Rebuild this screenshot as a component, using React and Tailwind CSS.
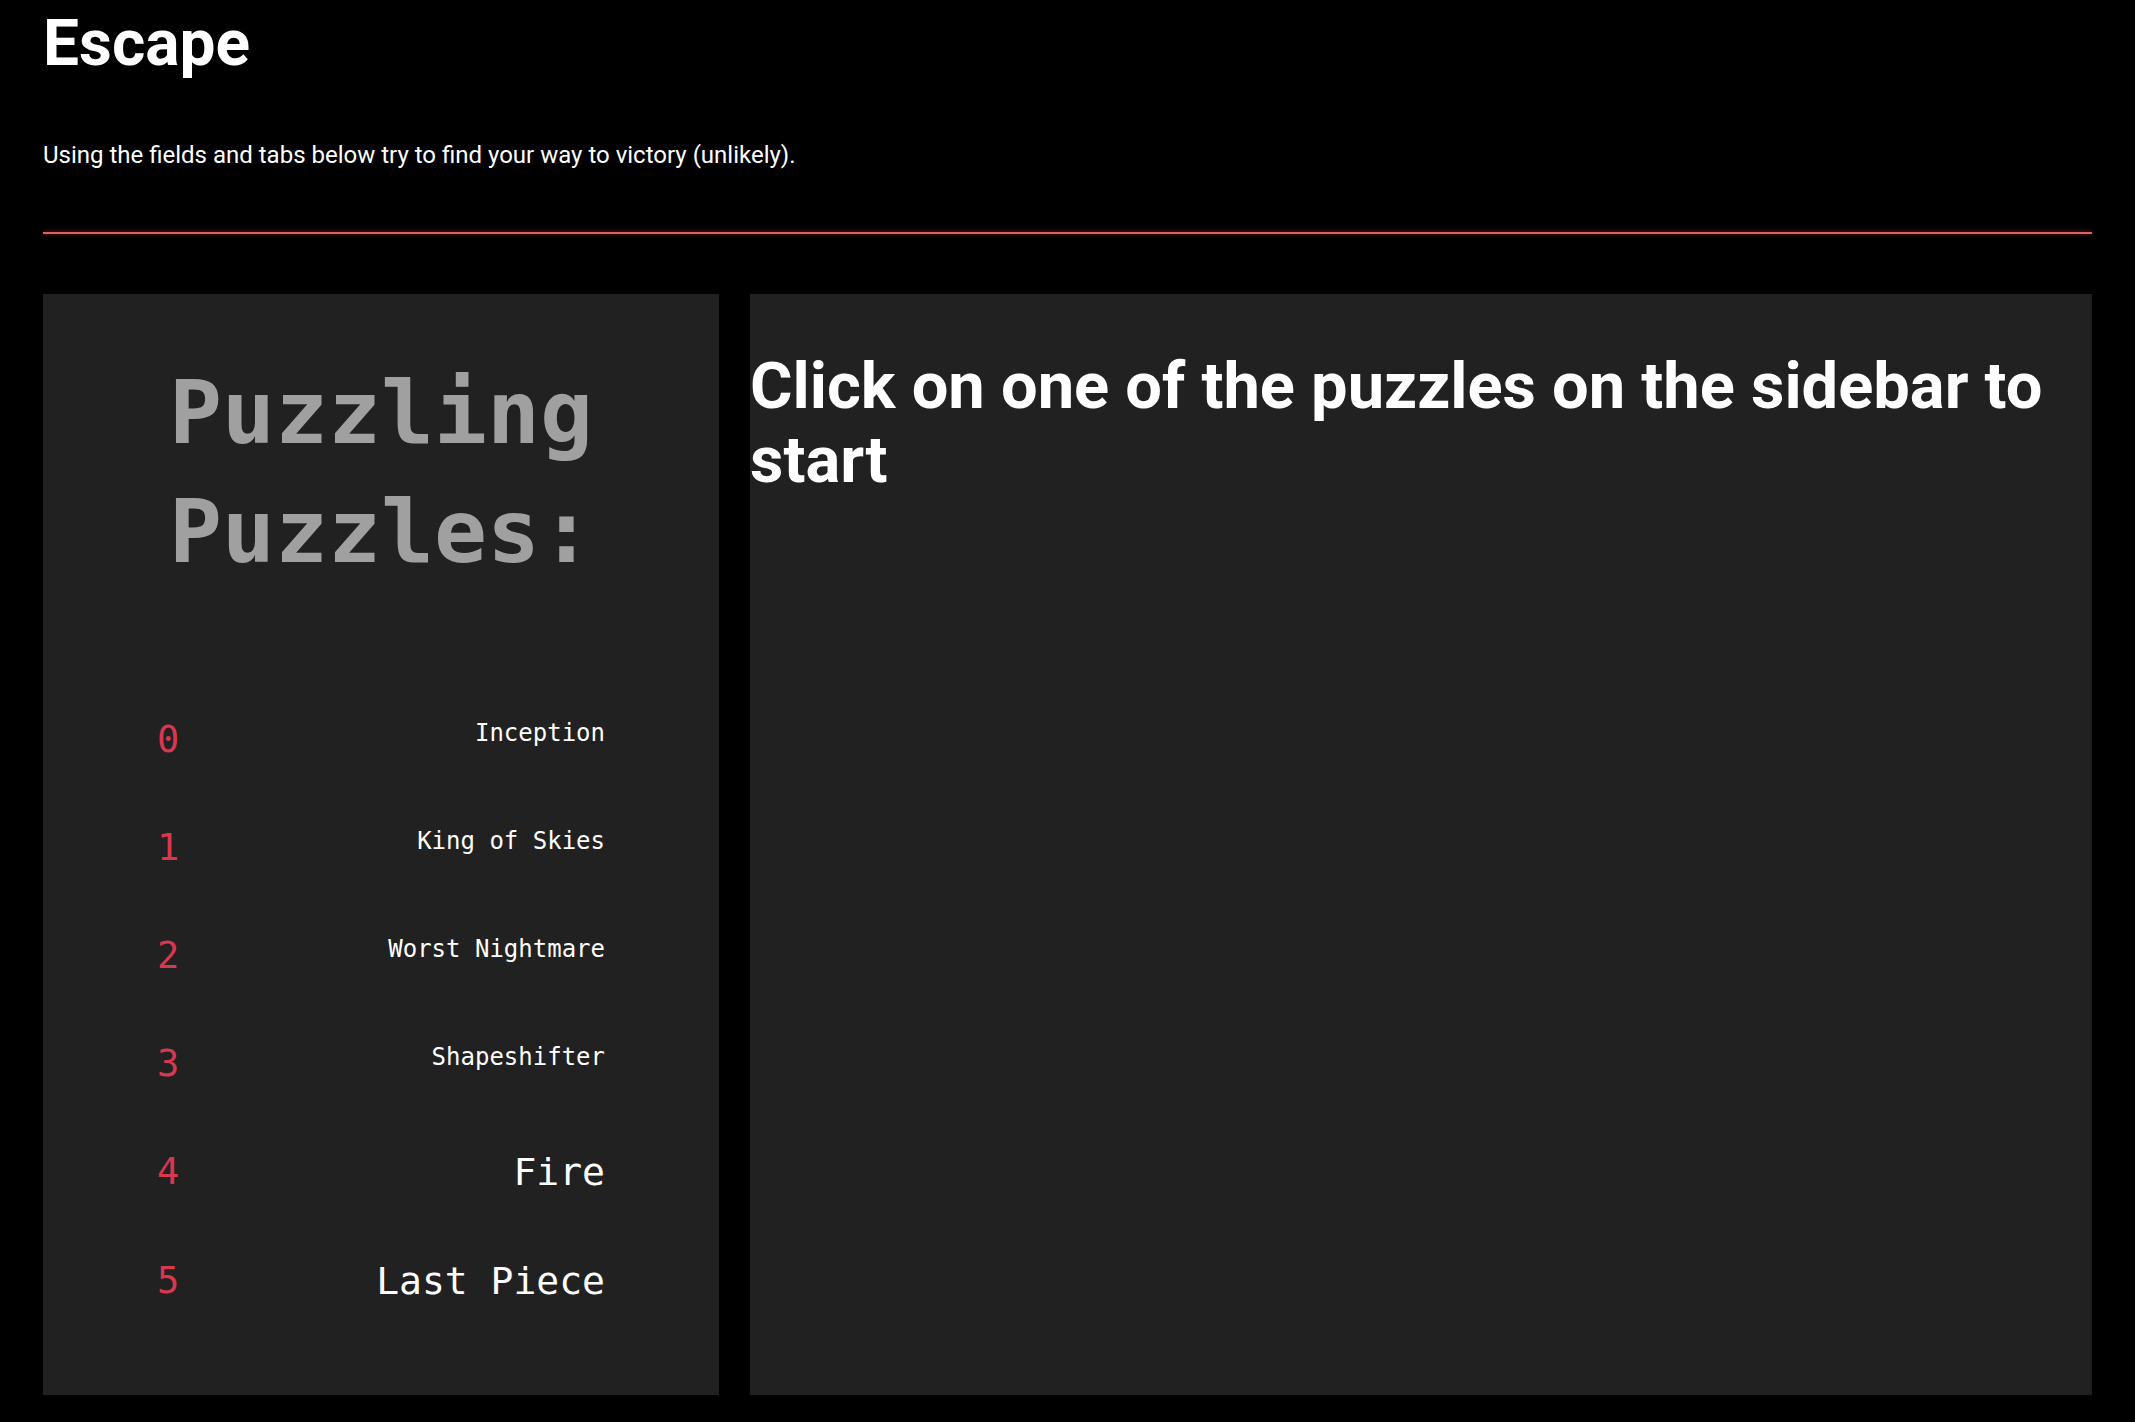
const puzzles = [
  { id: 0, name: "Inception", big: false },
  { id: 1, name: "King of Skies", big: false },
  { id: 2, name: "Worst Nightmare", big: false },
  { id: 3, name: "Shapeshifter", big: false },
  { id: 4, name: "Fire", big: true },
  { id: 5, name: "Last Piece", big: true },
];

const mono = "font-['DejaVu_Sans_Mono','Liberation_Mono',monospace]";

function Sidebar() {
  return (
    <aside className={`w-[676px] shrink-0 bg-[#212121] ${mono}`}>
      <h2 className="mt-[59px] text-center text-[88px] font-bold leading-[119px] text-[#a0a0a0]">
        Puzzling
        <br />
        Puzzles:
      </h2>
      <ul className="mt-[130px] flex flex-col gap-[71px] px-[114px]">
        {puzzles.map((item) => (
          <li className="flex items-start justify-between" key={item.id}>
            <span className="text-[37px] leading-none text-[#d7374f]">{item.id}</span>
            <span
              className={
                item.big
                  ? "text-[38px] leading-none text-white"
                  : "text-[24px] leading-none text-white"
              }
            >
              {item.name}
            </span>
          </li>
        ))}
      </ul>
    </aside>
  );
}

export default function App() {
  return (
    <div className="min-h-[1422px] bg-black px-[43px] font-['Roboto','Liberation_Sans',sans-serif] text-white">
      <header>
        <h1 className="pt-[6px] text-[64px] font-bold leading-[75px]">Escape</h1>
        <p className="mt-[60px] text-[24px] leading-[28px]">
          Using the fields and tabs below try to find your way to victory (unlikely).
        </p>
        <div className="mt-[63px] h-[2px] bg-[#e0605a] shadow-[0_0_4px_rgba(224,80,80,0.6)]" />
      </header>
      <main className="mt-[60px] flex h-[1101px] gap-[31px]">
        <Sidebar />
        <section className="flex-1 bg-[#212121]">
          <h1 className="mt-[55px] text-[65px] font-bold leading-[74px]">
            Click on one of the puzzles on the sidebar to start
          </h1>
        </section>
      </main>
    </div>
  );
}
